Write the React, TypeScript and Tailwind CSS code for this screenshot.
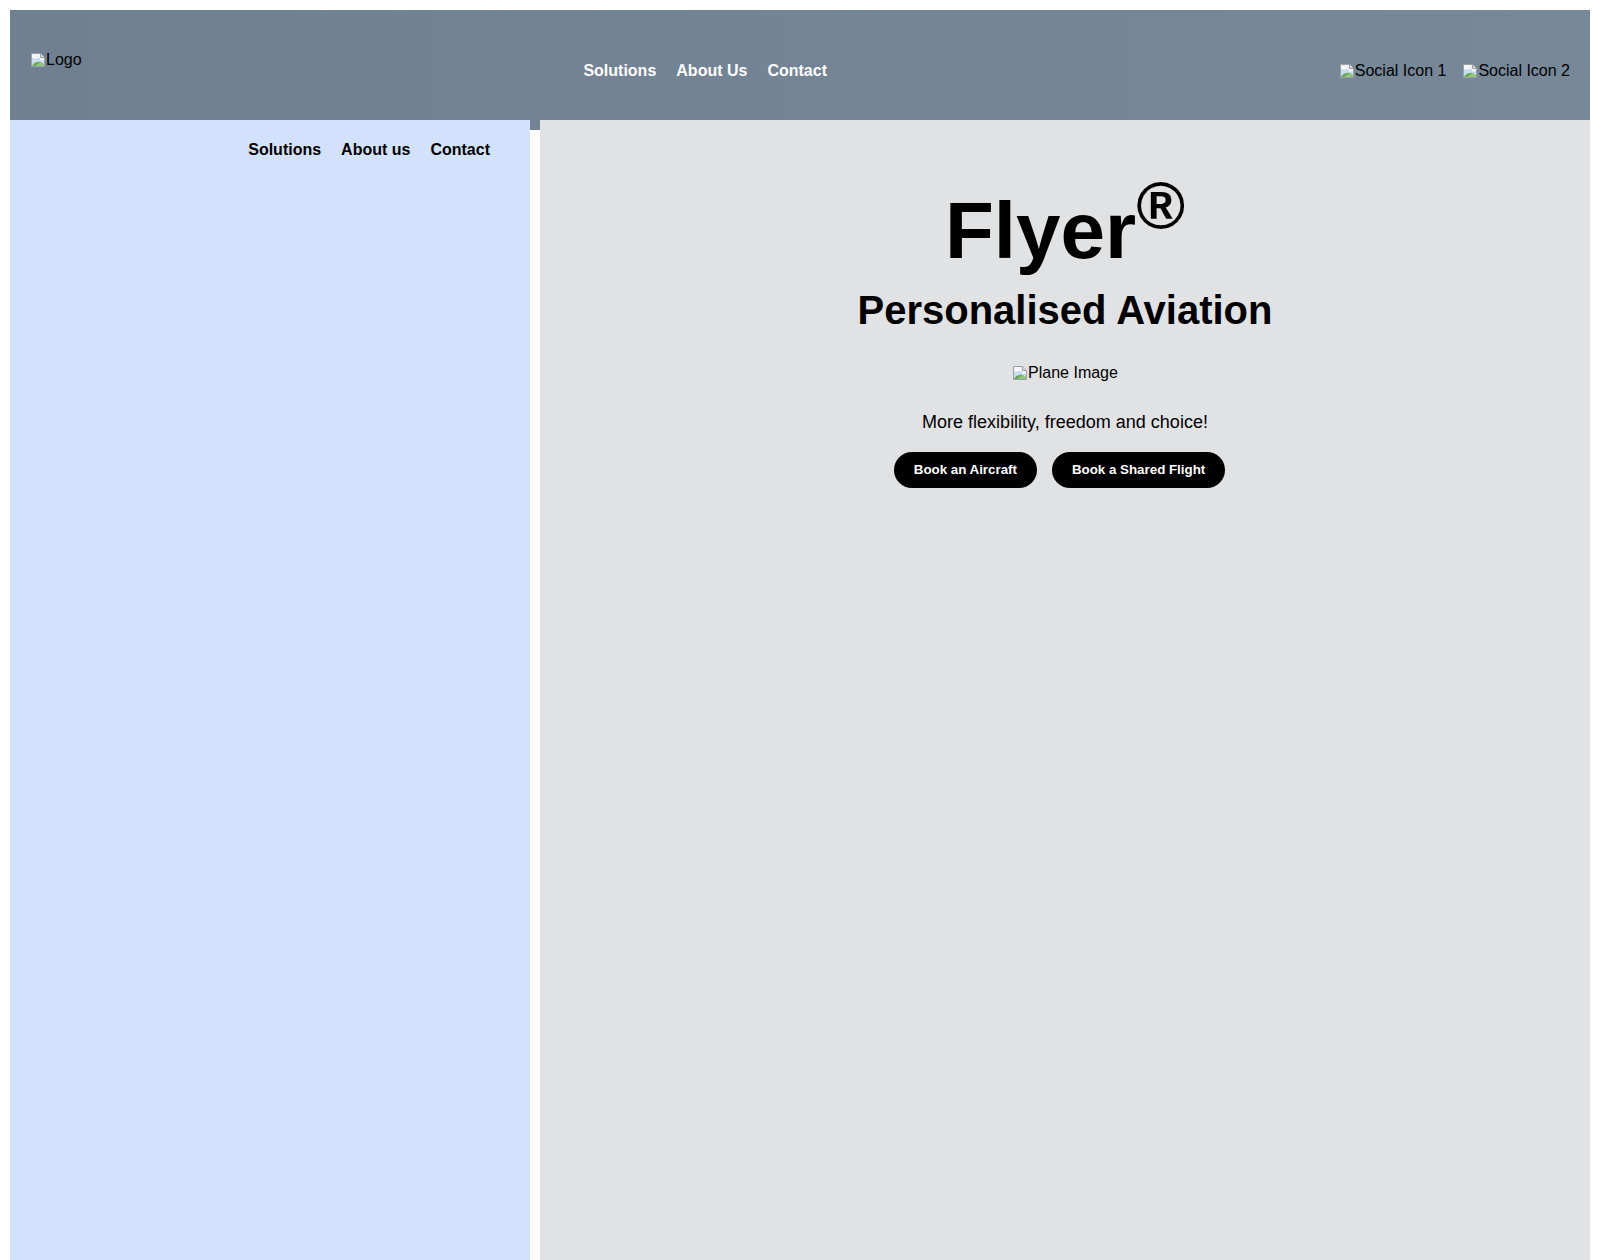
import React from 'react';

// Chrome-style broken image glyph shown before the alt text
function BrokenImage() {
  return (
    <svg width="16" height="16" viewBox="0 0 16 16" className="shrink-0">
      <path d="M1.5 1.5h9l4 4v9h-13z" fill="#f1f3f4" stroke="#9aa0a6" />
      <path d="M10.5 1.5v4h4" fill="#dadce0" stroke="#9aa0a6" />
      <path d="M2 6h8v2.5H14V14H2z" fill="#c8ddf3" />
      <path d="M3.2 5.2c.4-1 1.8-1 2.2-.1.8-.2 1.4.5 1.1 1.1H3c-.5 0-.5-.8.2-1z" fill="#ffffff" />
      <path d="M2 14c1.5-3 4.5-4.6 9-4.2L6 14z" fill="#6aa84f" />
      <path d="M11 9.8L14 12v2H6z" fill="#93c47d" />
    </svg>
  );
}

function ImgAlt({ alt }: { alt: string }) {
  return (
    <span className="flex items-center leading-[18px] text-black">
      <BrokenImage />
      <span>{alt}</span>
    </span>
  );
}

function Header() {
  return (
    <header className="flex h-[120px] items-center justify-between bg-linear-to-r from-[#708090] to-[#778899] px-5 pt-[2px]">
      <div className="mt-[39px] self-start">
        <ImgAlt alt="Logo" />
      </div>
      <nav className="mr-[10px] flex gap-5 text-base font-bold leading-[18px] text-white">
        <a href="#">Solutions</a>
        <a href="#">About Us</a>
        <a href="#">Contact</a>
      </nav>
      <div className="flex gap-4">
        <ImgAlt alt="Social Icon 1" />
        <ImgAlt alt="Social Icon 2" />
      </div>
    </header>
  );
}

export default function App() {
  return (
    <div className="min-h-screen bg-white p-[10px] font-['Liberation_Sans',Arial,sans-serif] text-black">
      <Header />
      <div className="-mt-[10px] flex gap-[10px]">
        <aside className="h-[1150px] w-[520px] bg-[#d3e2fc]">
          <nav className="flex justify-end gap-5 pr-10 pt-[21px] text-base font-bold leading-[18px]">
            <a href="#">Solutions</a>
            <a href="#">About us</a>
            <a href="#">Contact</a>
          </nav>
        </aside>
        <main className="flex h-[1150px] flex-1 flex-col items-center bg-[#e1e2e4] pt-[71px]">
          <h1 className="text-[80px] font-bold leading-none">
            Flyer<sup className="top-[-0.45em] text-[0.83em]">®</sup>
          </h1>
          <h2 className="mt-[19px] text-[40px] font-bold leading-none">Personalised Aviation</h2>
          <div className="mt-[34px]">
            <ImgAlt alt="Plane Image" />
          </div>
          <p className="mt-[30px] text-lg leading-[20px]">More flexibility, freedom and choice!</p>
          <div className="mt-5 flex gap-[15px] pr-[11px]">
            <button className="h-9 rounded-full bg-black px-5 text-[13.333px] font-bold text-white">
              Book an Aircraft
            </button>
            <button className="h-9 rounded-full bg-black px-5 text-[13.333px] font-bold text-white">
              Book a Shared Flight
            </button>
          </div>
        </main>
      </div>
    </div>
  );
}
